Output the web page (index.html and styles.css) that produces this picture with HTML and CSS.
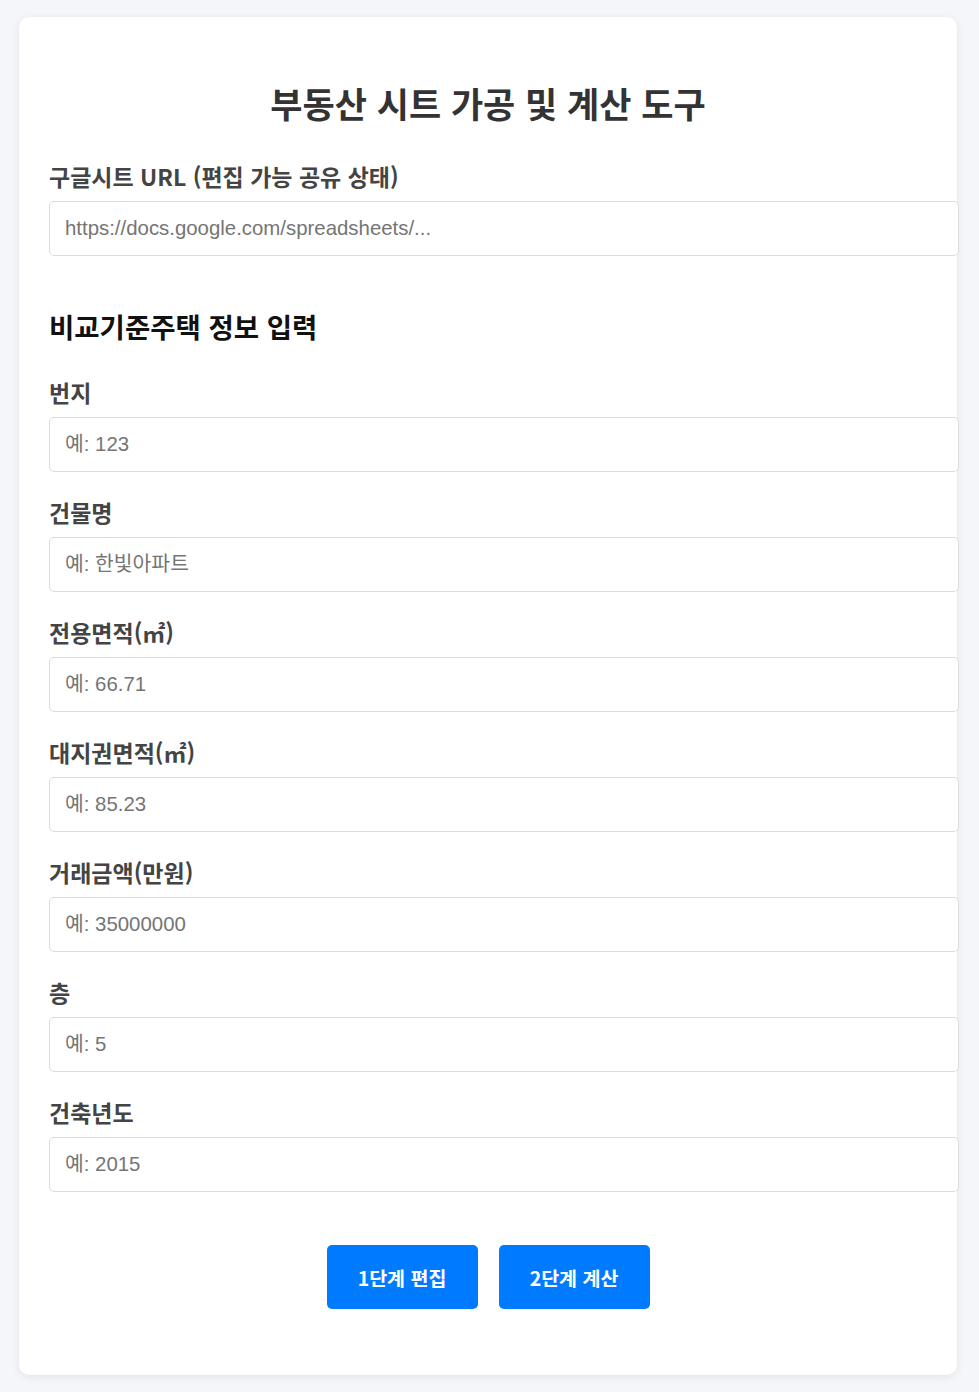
FILE: index.html
```html
<!DOCTYPE html>
<html lang="ko">
<head>
<meta charset="utf-8">
<title>부동산 시트 가공 및 계산 도구</title>
<link rel="stylesheet" href="styles.css">
</head>
<body>
<div class="card">
  <h1 class="title">부동산 시트 가공 및 계산 도구</h1>
  <div class="field">
    <label class="label" for="url">구글시트 URL (편집 가능 공유 상태)</label>
    <input class="input" id="url" type="text" placeholder="https://docs.google.com/spreadsheets/...">
  </div>
  <h3 class="section">비교기준주택 정보 입력</h3>
  <div class="field">
    <label class="label" for="f1">번지</label>
    <input class="input" id="f1" type="text" placeholder="예: 123">
  </div>
  <div class="field">
    <label class="label" for="f2">건물명</label>
    <input class="input" id="f2" type="text" placeholder="예: 한빛아파트">
  </div>
  <div class="field">
    <label class="label" for="f3">전용면적(㎡)</label>
    <input class="input" id="f3" type="text" placeholder="예: 66.71">
  </div>
  <div class="field">
    <label class="label" for="f4">대지권면적(㎡)</label>
    <input class="input" id="f4" type="text" placeholder="예: 85.23">
  </div>
  <div class="field">
    <label class="label" for="f5">거래금액(만원)</label>
    <input class="input" id="f5" type="text" placeholder="예: 35000000">
  </div>
  <div class="field">
    <label class="label" for="f6">층</label>
    <input class="input" id="f6" type="text" placeholder="예: 5">
  </div>
  <div class="field">
    <label class="label" for="f7">건축년도</label>
    <input class="input" id="f7" type="text" placeholder="예: 2015">
  </div>
  <div class="buttons">
    <button class="btn" type="button">1단계 편집</button>
    <button class="btn" type="button">2단계 계산</button>
  </div>
</div>
</body>
</html>
```
FILE: styles.css
```css
html, body {
  margin: 0;
  padding: 0;
  background: #f4f6f9;
}
body {
  font-family: "Noto Sans CJK KR", "Noto Sans", "Liberation Sans", sans-serif;
  color: #333;
  padding: 17px 0 17px 19px;
}
.card {
  width: 878px;
  padding: 30px;
  background: #fff;
  border-radius: 10px;
  box-shadow: 0 2px 8px rgba(0, 0, 0, 0.08);
}
.title {
  margin: 34px 0 36px;
  font-size: 35px;
  line-height: 44px;
  font-weight: 700;
  text-align: center;
  color: #333;
}
.field {
  margin-bottom: 25px;
}
.label {
  display: block;
  font-size: 23px;
  line-height: 30px;
  font-weight: 700;
  color: #444;
  margin-bottom: 10px;
}
.input {
  display: block;
  width: 100%;
  box-sizing: content-box;
  margin: 0;
  padding: 15px;
  height: 23px;
  border: 1px solid #dcdcdc;
  border-radius: 5px;
  font-family: "Liberation Sans", "Noto Sans CJK KR", sans-serif;
  font-size: 20.4px;
  line-height: 23px;
  color: #333;
  background: #fff;
}
.input::placeholder {
  color: #757575;
}
.section {
  margin: 53px 0 34px;
  font-size: 27.5px;
  line-height: 34px;
  font-weight: 700;
  color: #111;
}
.buttons {
  display: flex;
  justify-content: center;
  gap: 21px;
  margin-top: 53px;
  margin-bottom: 36px;
}
.btn {
  width: 151px;
  height: 64px;
  padding: 0;
  border: none;
  border-radius: 5px;
  background: #007bff;
  color: #fff;
  font-family: "Noto Sans CJK KR", sans-serif;
  font-size: 19.5px;
  font-weight: 700;
}
```
